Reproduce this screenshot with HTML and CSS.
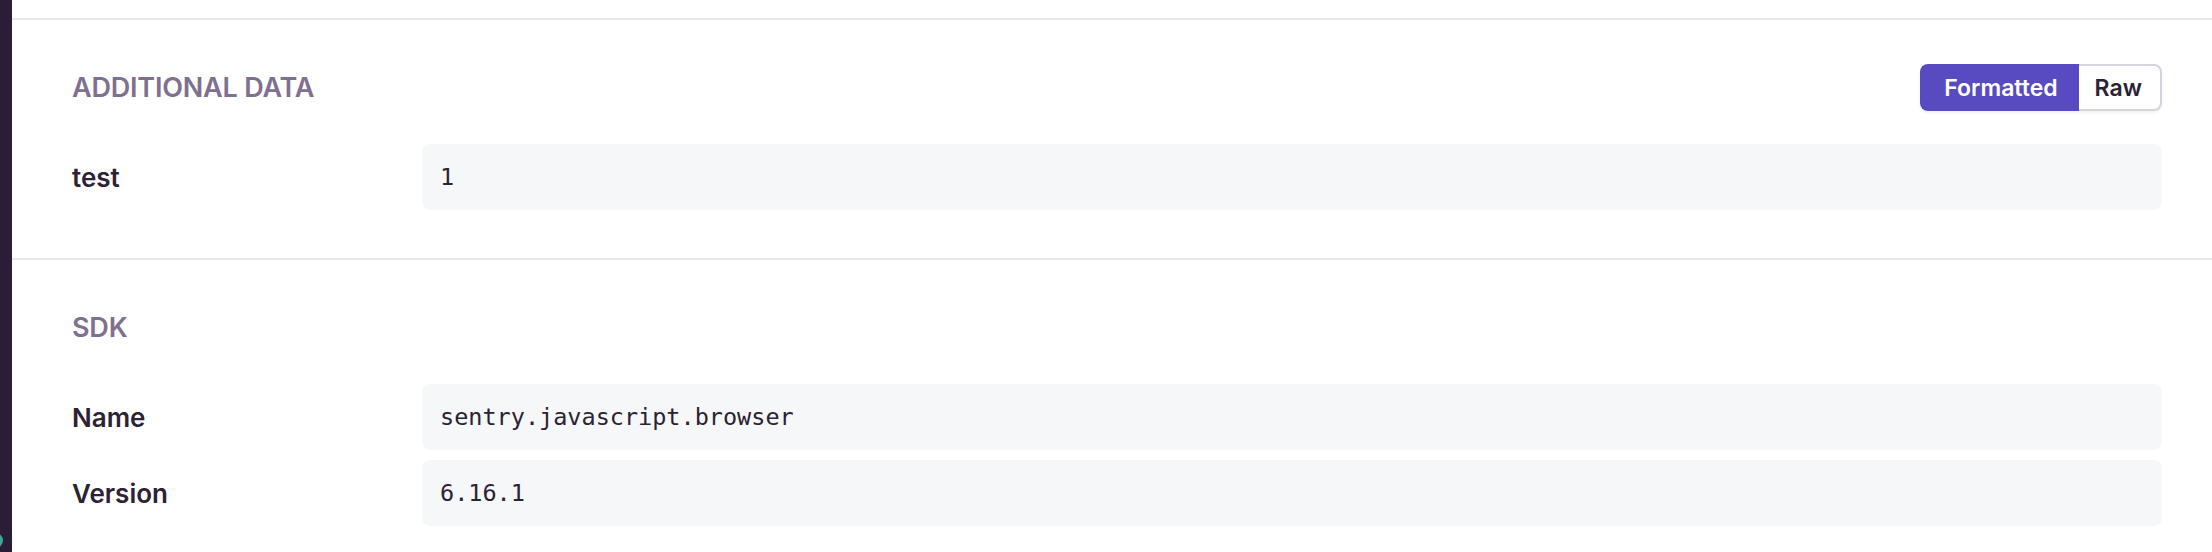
FILE: index.html
```html
<!DOCTYPE html>
<html lang="en">
<head>
  <meta charset="UTF-8">
  <title>Event details</title>
  <link rel="stylesheet" href="styles.css">
</head>
<body>
  <div class="app">
    <aside class="sidebar">
      <span class="sidebar-dot"></span>
    </aside>

    <main class="content">
      <div class="prev-section"></div>

      <section class="data-section">
        <div class="section-head">
          <h3>Additional Data</h3>
          <div class="toggle">
            <button class="toggle-btn active">Formatted</button>
            <button class="toggle-btn">Raw</button>
          </div>
        </div>
        <div class="kv-list">
          <div class="kv-row">
            <div class="kv-key">test</div>
            <div class="kv-value">1</div>
          </div>
        </div>
      </section>

      <section class="data-section">
        <div class="section-head">
          <h3>SDK</h3>
        </div>
        <div class="kv-list">
          <div class="kv-row">
            <div class="kv-key">Name</div>
            <div class="kv-value">sentry.javascript.browser</div>
          </div>
          <div class="kv-row">
            <div class="kv-key">Version</div>
            <div class="kv-value">6.16.1</div>
          </div>
        </div>
      </section>
    </main>
  </div>
</body>
</html>
```

FILE: styles.css
```css
html, body { margin: 0; padding: 0; height: 100%; background: #fff; }
body { font-family: Inter, "Noto Sans", sans-serif; color: #2b2233; overflow: hidden; }

.app { display: flex; height: 552px; }

.sidebar {
  width: 12px;
  flex-shrink: 0;
  background-color: #2b1d38;
  position: relative;
  overflow: hidden;
}
.sidebar-dot {
  position: absolute;
  left: -12px;
  top: 533px;
  width: 15px;
  height: 15px;
  border-radius: 50%;
  background-color: #3ea88f;
}

.content { flex: 1; min-width: 0; }

.prev-section { height: 18px; border-bottom: 2px solid #e7e6ec; }

.data-section {
  padding: 44px 50px 48px 60px;
  border-bottom: 2px solid #e7e6ec;
}

.section-head {
  display: flex;
  align-items: center;
  justify-content: space-between;
  height: 47px;
  margin-bottom: 33px;
}
.section-head h3 {
  margin: 0;
  font-size: 27px;
  font-weight: 600;
  text-transform: uppercase;
  color: #80708f;
  letter-spacing: -0.2px;
}

.toggle {
  display: flex;
  height: 47px;
  border-radius: 8px;
  box-shadow: 0 2px 3px rgba(43, 34, 51, 0.06);
}
.toggle-btn {
  font-family: Inter, "Noto Sans", sans-serif;
  font-size: 23px;
  font-weight: 600;
  padding: 0 21px 0 22px;
  border: 2px solid #d6d3de;
  background: #fff;
  color: #2b2233;
  cursor: pointer;
}
.toggle-btn:first-child { border-radius: 8px 0 0 8px; border-right: none; }
.toggle-btn:last-child { border-radius: 0 8px 8px 0; border-left: none; padding: 0 18px 0 16px; }
.toggle-btn.active { background: #584ac0; border-color: #584ac0; color: #fff; }

.kv-list { display: flex; flex-direction: column; gap: 10px; }
.kv-row { display: flex; align-items: center; }
.kv-key {
  width: 350px;
  flex-shrink: 0;
  font-size: 26px;
  font-weight: 600;
  color: #2b2233;
}
.kv-value {
  flex: 1;
  height: 66px;
  display: flex;
  align-items: center;
  padding: 0 18px;
  background-color: #f6f7f9;
  border-radius: 8px;
  font-family: "DejaVu Sans Mono", "Liberation Mono", monospace;
  font-size: 23.5px;
  color: #2b2233;
}
```
